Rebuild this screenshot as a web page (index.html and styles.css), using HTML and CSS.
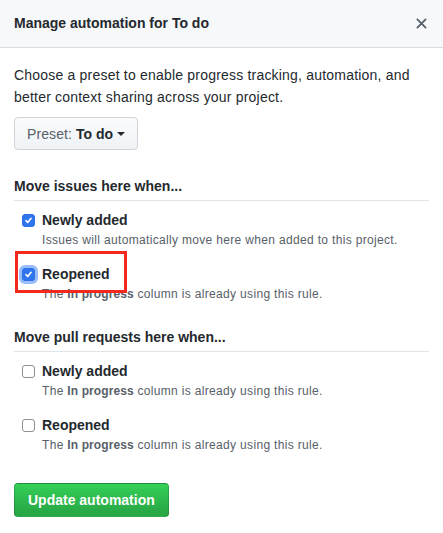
FILE: index.html
```html
<!DOCTYPE html>
<html lang="en">
<head>
<meta charset="utf-8">
<title>Manage automation for To do</title>
<link rel="stylesheet" href="styles.css">
</head>
<body>
<div class="dialog">
  <header class="dialog-header">
    <h2 class="dialog-title">Manage automation for To do</h2>
    <button class="close" aria-label="Close">
      <svg width="12" height="12" viewBox="0 0 12 12"><path d="M1.5 1.5l9 9M10.5 1.5l-9 9" stroke="#586069" stroke-width="2" stroke-linecap="round"/></svg>
    </button>
  </header>
  <div class="dialog-body">
    <p class="intro">Choose a preset to enable progress tracking, automation, and better context sharing across your project.</p>
    <button class="preset">Preset: <strong>To do</strong><span class="caret"></span></button>

    <h3 class="section-title">Move issues here when...</h3>
    <ul class="checks">
      <li class="check">
        <span class="box checked"><svg viewBox="0 0 12 12"><path d="M3.3 6.2l1.9 2 3.6-4.6" fill="none" stroke="#fff" stroke-width="1.8" stroke-linecap="round" stroke-linejoin="round"/></svg></span>
        <div class="check-text">
          <span class="check-label">Newly added</span>
          <span class="note">Issues will automatically move here when added to this project.</span>
        </div>
      </li>
      <li class="check">
        <span class="box checked focused"><svg viewBox="0 0 12 12"><path d="M3.3 6.2l1.9 2 3.6-4.6" fill="none" stroke="#fff" stroke-width="1.8" stroke-linecap="round" stroke-linejoin="round"/></svg></span>
        <div class="check-text">
          <span class="check-label">Reopened</span>
          <span class="note">The <b>In progress</b> column is already using this rule.</span>
        </div>
        <span class="highlight"></span>
      </li>
    </ul>

    <h3 class="section-title second">Move pull requests here when...</h3>
    <ul class="checks">
      <li class="check">
        <span class="box"></span>
        <div class="check-text">
          <span class="check-label">Newly added</span>
          <span class="note">The <b>In progress</b> column is already using this rule.</span>
        </div>
      </li>
      <li class="check">
        <span class="box"></span>
        <div class="check-text">
          <span class="check-label">Reopened</span>
          <span class="note">The <b>In progress</b> column is already using this rule.</span>
        </div>
      </li>
    </ul>

    <button class="primary">Update automation</button>
  </div>
</div>
</body>
</html>
```
FILE: styles.css
```css
* { box-sizing: border-box; }
html, body { margin: 0; padding: 0; background: #fff; }
body {
  font-family: "Liberation Sans", Arial, sans-serif;
  font-size: 14px;
  color: #24292e;
}
.dialog { width: 443px; }
.dialog-header {
  height: 48px;
  background: #f6f8fa;
  border-bottom: 1px solid #d8dbe0;
  display: flex;
  align-items: center;
  justify-content: space-between;
  padding: 0 16px 1px 14px;
}
.dialog-title {
  margin: 0;
  font-size: 14px;
  font-weight: 700;
  line-height: 21px;
  color: #24292e;
}
.close {
  border: 0;
  background: none;
  padding: 0;
  width: 12px;
  height: 12px;
  display: flex;
  align-items: center;
  justify-content: center;
}
.close svg { width: 11px; height: 11px; }
.dialog-body { padding: 16px 14px 20px; }
.intro {
  margin: 0;
  line-height: 22px;
  letter-spacing: 0.2px;
  color: #24292e;
}
.preset {
  margin-top: 9px;
  height: 33px;
  padding: 0 12px;
  display: flex;
  align-items: center;
  font-family: inherit;
  font-size: 14px;
  letter-spacing: 0.1px;
  color: #586069;
  background: linear-gradient(#fafbfc, #eff3f6);
  border: 1px solid #d1d5da;
  border-radius: 4px;
}
.preset strong { color: #24292e; margin-left: 4px; letter-spacing: 0; }
.caret {
  display: inline-block;
  margin-left: 4px;
  width: 0; height: 0;
  border-left: 4px solid transparent;
  border-right: 4px solid transparent;
  border-top: 4px solid #24292e;
}
.section-title {
  margin: 26px 0 0;
  font-size: 14px;
  font-weight: 700;
  line-height: 21px;
  padding-bottom: 3px;
  border-bottom: 1px solid #e1e4e8;
}
.section-title.second { margin-top: 24px; }
.checks { list-style: none; margin: 0; padding: 9px 0 0; }
.check {
  position: relative;
  display: flex;
  gap: 7px;
  padding-left: 8px;
}
.check + .check { margin-top: 15px; }
.box {
  flex: none;
  width: 13px;
  height: 13px;
  margin-top: 4px;
  border: 1px solid #8d8f93;
  border-radius: 3px;
  background: #fff;
  display: flex;
}
.box.checked { background: #2f75ef; border-color: #2f6fe0; }
.box svg { width: 11px; height: 11px; }
.box.focused { box-shadow: 0 0 0 3px rgba(70, 135, 245, 0.55); }
.check-text { display: flex; flex-direction: column; }
.check-label { font-weight: 700; line-height: 21px; color: #24292e; }
.note { font-size: 12px; line-height: 18px; letter-spacing: 0.33px; color: #586069; }
.note b { font-weight: 700; letter-spacing: 0.1px; }
.highlight {
  position: absolute;
  left: 1px;
  top: -13px;
  width: 112px;
  height: 42px;
  border: 3px solid #f4281c;
  pointer-events: none;
}
.primary {
  margin-top: 29px;
  height: 34px;
  padding: 0 13px;
  font-family: inherit;
  font-size: 14px;
  font-weight: 700;
  color: #fff;
  background: linear-gradient(#34d058, #28a745 90%);
  border: 1px solid rgba(27, 31, 35, 0.2);
  border-radius: 4px;
}
```
